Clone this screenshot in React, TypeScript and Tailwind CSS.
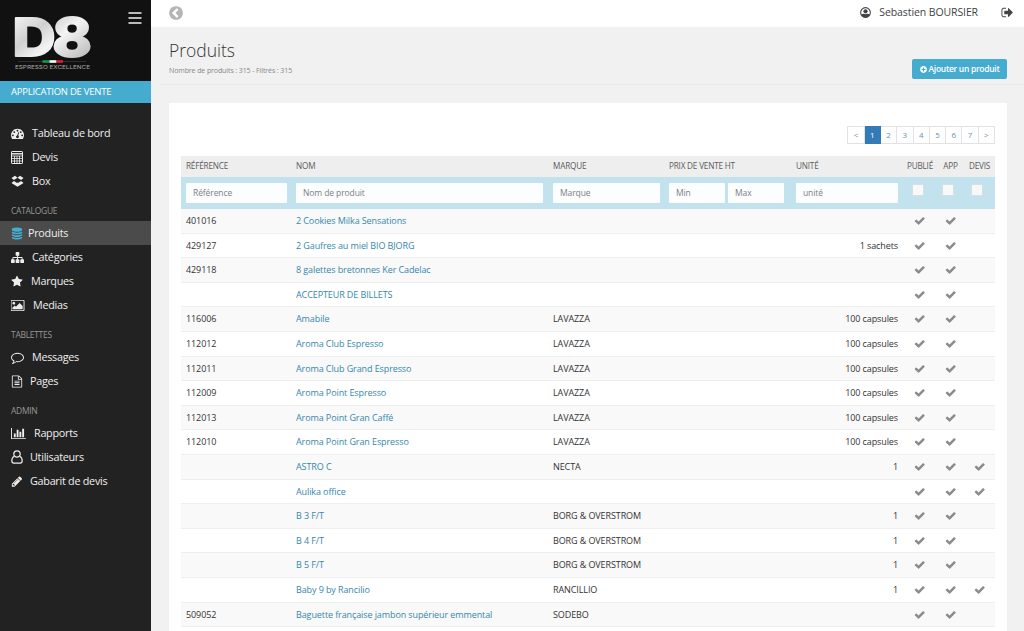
import type { ReactNode } from "react";
import { FaPlusCircle } from "react-icons/fa";

type Product = {
  ref?: string;
  name: string;
  brand?: string;
  unit?: string;
  quote?: boolean;
};

const products: Product[] = [
  { ref: "401016", name: "2 Cookies Milka Sensations" },
  { ref: "429127", name: "2 Gaufres au miel BIO BJORG", unit: "1 sachets" },
  { ref: "429118", name: "8 galettes bretonnes Ker Cadelac" },
  { name: "ACCEPTEUR DE BILLETS" },
  { ref: "116006", name: "Amabile", brand: "LAVAZZA", unit: "100 capsules" },
  { ref: "112012", name: "Aroma Club Espresso", brand: "LAVAZZA", unit: "100 capsules" },
  { ref: "112011", name: "Aroma Club Grand Espresso", brand: "LAVAZZA", unit: "100 capsules" },
  { ref: "112009", name: "Aroma Point Espresso", brand: "LAVAZZA", unit: "100 capsules" },
  { ref: "112013", name: "Aroma Point Gran Caffé", brand: "LAVAZZA", unit: "100 capsules" },
  { ref: "112010", name: "Aroma Point Gran Espresso", brand: "LAVAZZA", unit: "100 capsules" },
  { name: "ASTRO C", brand: "NECTA", unit: "1", quote: true },
  { name: "Aulika office", quote: true },
  { name: "B 3 F/T", brand: "BORG & OVERSTROM", unit: "1" },
  { name: "B 4 F/T", brand: "BORG & OVERSTROM", unit: "1" },
  { name: "B 5 F/T", brand: "BORG & OVERSTROM", unit: "1" },
  { name: "Baby 9 by Rancilio", brand: "RANCILLIO", unit: "1", quote: true },
  { ref: "509052", name: "Baguette française jambon supérieur emmental", brand: "SODEBO" }
];

const pages = ["<", "1", "2", "3", "4", "5", "6", "7", ">"];

const columns = "grid grid-cols-[110px_257px_116px_127px_112px_34px_27px_31px]";

const paths = {
  dashboard:
    "M384 1152q0-53-37.5-90.5t-90.5-37.5-90.5 37.5-37.5 90.5 37.5 90.5 90.5 37.5 90.5-37.5 37.5-90.5zm192-448q0-53-37.5-90.5t-90.5-37.5-90.5 37.5-37.5 90.5 37.5 90.5 90.5 37.5 90.5-37.5 37.5-90.5zm428 481l101-382q6-26-7.5-48.5t-38.5-29.5-48 6.5-30 39.5l-101 382q-60 5-107 43.5t-63 98.5q-20 77 20 146t117 89 146-20 89-117q16-60-6-117t-72-91zm660-33q0-53-37.5-90.5t-90.5-37.5-90.5 37.5-37.5 90.5 37.5 90.5 90.5 37.5 90.5-37.5 37.5-90.5zm-640-640q0-53-37.5-90.5t-90.5-37.5-90.5 37.5-37.5 90.5 37.5 90.5 90.5 37.5 90.5-37.5 37.5-90.5zm448 192q0-53-37.5-90.5t-90.5-37.5-90.5 37.5-37.5 90.5 37.5 90.5 90.5 37.5 90.5-37.5 37.5-90.5zm320 448q0 261-141 483-19 29-54 29h-1402q-35 0-54-29-141-221-141-483 0-182 71-348t191-286 286-191 348-71 348 71 286 191 191 286 71 348z",
  dropbox:
    "M402 829l494 305-342 285-490-319zm986 388v108l-490 293v1l-1-1-1 1v-1l-489-293v-108l147 96 342-284v-2l1 1 1-1v2l343 284zm-834-1106l342 285-494 304-338-270zm836 718l338 271-489 319-343-285zm-151-718l489 319-338 270-494-304z",
  database:
    "M896 768q237 0 443-43t325-127v170q0 69-103 128t-280 93.5-385 34.5-385-34.5-280-93.5-103-128v-170q119 84 325 127t443 43zm0 768q237 0 443-43t325-127v170q0 69-103 128t-280 93.5-385 34.5-385-34.5-280-93.5-103-128v-170q119 84 325 127t443 43zm0-384q237 0 443-43t325-127v170q0 69-103 128t-280 93.5-385 34.5-385-34.5-280-93.5-103-128v-170q119 84 325 127t443 43zm0-1152q208 0 385 34.5t280 93.5 103 128v128q0 69-103 128t-280 93.5-385 34.5-385-34.5-280-93.5-103-128v-128q0-69 103-128t280-93.5 385-34.5z",
  sitemap:
    "M1792 1248v320q0 40-28 68t-68 28h-320q-40 0-68-28t-28-68v-320q0-40 28-68t68-28h96v-192h-512v192h96q40 0 68 28t28 68v320q0 40-28 68t-68 28h-320q-40 0-68-28t-28-68v-320q0-40 28-68t68-28h96v-192h-512v192h96q40 0 68 28t28 68v320q0 40-28 68t-68 28h-320q-40 0-68-28t-28-68v-320q0-40 28-68t68-28h96v-192q0-52 38-90t90-38h512v-192h-96q-40 0-68-28t-28-68v-320q0-40 28-68t68-28h320q40 0 68 28t28 68v320q0 40-28 68t-68 28h-96v192h512q52 0 90 38t38 90v192h96q40 0 68 28t28 68z",
  star: "M1728 647q0 22-26 48l-363 354 86 500q1 7 1 20 0 21-10.5 35.5t-30.5 14.5q-19 0-40-12l-449-236-449 236q-22 12-40 12-21 0-31.5-14.5t-10.5-35.5q0-6 2-20l86-500-364-354q-25-27-25-48 0-37 56-46l502-73 225-455q19-41 49-41t49 41l225 455 502 73q56 9 56 46z",
  picture:
    "M576 576q0 80-56 136t-136 56-136-56-56-136 56-136 136-56 136 56 56 136zm1024 384v448h-1408v-192l320-320 160 160 512-512zm96-704h-1600q-13 0-22.5 9.5t-9.5 22.5v1216q0 13 9.5 22.5t22.5 9.5h1600q13 0 22.5-9.5t9.5-22.5v-1216q0-13-9.5-22.5t-22.5-9.5zm160 32v1216q0 66-47 113t-113 47h-1600q-66 0-113-47t-47-113v-1216q0-66 47-113t113-47h1600q66 0 113 47t47 113z",
  comment:
    "M896 384q-204 0-381.5 69.5t-282 187.5-104.5 255q0 112 71.5 213.5t201.5 175.5l87 50-27 96q-24 91-70 172 152-63 275-171l43-38 57 6q69 8 130 8 204 0 381.5-69.5t282-187.5 104.5-255-104.5-255-282-187.5-381.5-69.5zm896 512q0 174-120 321.5t-326 233-450 85.5q-70 0-145-8-198 175-460 242-49 14-114 22h-5q-15 0-27-10.5t-16-27.5v-1q-3-4-.5-12t2-10 4.5-9.5l6-9 7-8.5 8-9q7-8 31-34.5t34.5-38 31-39.5 32.5-51 27-59 26-76q-157-89-247.5-220t-90.5-281q0-174 120-321.5t326-233 450-85.5 450 85.5 326 233 120 321.5z",
  file: "M1596 380q28 28 48 76t20 88v1152q0 40-28 68t-68 28h-1344q-40 0-68-28t-28-68v-1600q0-40 28-68t68-28h896q40 0 88 20t76 48zm-444-244v376h376q-10-29-22-41l-313-313q-12-12-41-22zm384 1528v-1024h-416q-40 0-68-28t-28-68v-416h-768v1536h1280zm-1024-864q0-14 9-23t23-9h704q14 0 23 9t9 23v64q0 14-9 23t-23 9h-704q-14 0-23-9t-9-23v-64zm736 224q14 0 23 9t9 23v64q0 14-9 23t-23 9h-704q-14 0-23-9t-9-23v-64q0-14 9-23t23-9h704zm0 256q14 0 23 9t9 23v64q0 14-9 23t-23 9h-704q-14 0-23-9t-9-23v-64q0-14 9-23t23-9h704z",
  chart:
    "M640 896v512h-256v-512h256zm384-512v1024h-256v-1024h256zm1024 1152v128h-2048v-1536h128v1408h1920zm-640-896v768h-256v-768h256zm384-384v1152h-256v-1152h256z",
  pencil:
    "M491 1536l91-91-235-235-91 91v107h128v128h107zm523-928q0-22-22-22-10 0-17 7l-542 542q-7 7-7 17 0 22 22 22 10 0 17-7l542-542q7-7 7-17zm-54-192l416 416-832 832h-416v-416zm683 96q0 53-37 90l-166 166-416-416 166-165q36-38 90-38 53 0 91 38l235 234q37 39 37 91z",
  check:
    "M1671 566q0 40-28 68l-724 724-136 136q-28 28-68 28t-68-28l-136-136-362-362q-28-28-28-68t28-68l136-136q28-28 68-28t68 28l294 295 656-657q28-28 68-28t68 28l136 136q28 28 28 68z",
  back: "M1037 1395l102-102q19-19 19-45t-19-45l-307-307 307-307q19-19 19-45t-19-45l-102-102q-19-19-45-19t-45 19l-454 454q-19 19-19 45t19 45l454 454q19 19 45 19t45-19zm627-499q0 209-103 385.5t-279.5 279.5-385.5 103-385.5-103-279.5-279.5-103-385.5 103-385.5 279.5-279.5 385.5-103 385.5 103 279.5 279.5 103 385.5z",
  signOut:
    "M704 1440q0 4 1 20t.5 26.5-3 23.5-10 19.5-20.5 6.5h-320q-119 0-203.5-84.5t-84.5-203.5v-704q0-119 84.5-203.5t203.5-84.5h320q13 0 22.5 9.5t9.5 22.5q0 4 1 20t.5 26.5-3 23.5-10 19.5-20.5 6.5h-320q-66 0-113 47t-47 113v704q0 66 47 113t113 47h312l11.5 1 11.5 3 8 5.5 7 9 2 13.5zm928-544q0 26-19 45l-544 544q-19 19-45 19t-45-19-19-45v-288h-448q-26 0-45-19t-19-45v-384q0-26 19-45t45-19h448v-288q0-26 19-45t45-19 45 19l544 544q19 19 19 45z"
};

function Glyph({ d, box = "0 0 1792 1792", className }: { d: string; box?: string; className: string }) {
  return (
    <svg viewBox={box} className={className} fill="currentColor">
      <path d={d} />
    </svg>
  );
}

function CalculatorIcon() {
  return (
    <svg viewBox="0 0 12 13" className="h-[13px] w-3" fill="none" stroke="currentColor">
      <rect x="0.5" y="0.5" width="11" height="12" rx="0.6" />
      <path d="M1 2.8h10" strokeWidth="1.4" />
      <path d="M1 5h10M1 7.5h10M1 10h10M3.5 5v7.5M6 5v7.5M8.5 5v7.5" strokeWidth="0.8" />
    </svg>
  );
}

function UserIcon() {
  return (
    <svg viewBox="0 0 12 14" className="h-3.5 w-3" fill="none" stroke="currentColor" strokeWidth="1.2">
      <circle cx="6" cy="4" r="3.2" />
      <path d="M3.3 6.2C1.6 7 .8 8.7.8 10.8c0 1.5.8 2.4 2 2.4h6.4c1.2 0 2-.9 2-2.4 0-2.1-.8-3.8-2.5-4.6" />
    </svg>
  );
}

function AccountIcon() {
  return (
    <svg viewBox="0 0 12 12" className="h-[11px] w-[11px]" fill="currentColor">
      <circle cx="6" cy="6" r="5.3" fill="none" stroke="currentColor" strokeWidth="1.2" />
      <circle cx="6" cy="4.7" r="2.3" />
      <path d="M1.2 8.6C2 7.8 3.4 7.4 4.4 7.4c1 .6 2.2.6 3.2 0 1 0 2.4.4 3.2 1.2C8.6 12.4 3.4 12.4 1.2 8.6z" />
    </svg>
  );
}

function Logo() {
  return (
    <svg viewBox="0 0 80 58" className="h-[58px] w-20 overflow-visible">
      <defs>
        <linearGradient id="steel" x1="0" y1="0" x2="1" y2="1">
          <stop offset="0" stopColor="#ffffff" />
          <stop offset="0.35" stopColor="#d0d0d0" />
          <stop offset="0.55" stopColor="#f4f4f4" />
          <stop offset="1" stopColor="#a9a9a9" />
        </linearGradient>
      </defs>
      <text
        x="-1.5"
        y="41"
        fill="url(#steel)"
        stroke="url(#steel)"
        strokeWidth="1.8"
        strokeLinejoin="round"
        fontFamily="Inter, sans-serif"
        fontWeight="800"
        fontSize="52"
        letterSpacing="-3"
        textLength="76"
        lengthAdjust="spacingAndGlyphs"
      >
        D8
      </text>
      <path d="M4 46.5h68" stroke="#3c3c3c" strokeWidth="0.7" />
      <path d="M28.5 46.5h7" stroke="#159a4b" strokeWidth="2.6" />
      <path d="M35.5 46.5h7" stroke="#ffffff" strokeWidth="2.6" />
      <path d="M42.5 46.5h6.5" stroke="#d8202f" strokeWidth="2.6" />
      <text x="1" y="54" fontSize="4.8" fontFamily="Inter, sans-serif" fill="#a8a8a8" textLength="75" lengthAdjust="spacingAndGlyphs">ESPRESSO EXCELLENCE</text>
    </svg>
  );
}

function NavItem({ icon, label, gap, active }: { icon: ReactNode; label: string; gap: string; active?: boolean }) {
  return (
    <a className={`flex h-6 items-center pl-[11px] text-[10.8px] tracking-[-0.27px] text-[#eeeeee] ${gap} ${active ? "bg-[#4b4b4b]" : ""}`}>
      {icon}
      <span>{label}</span>
    </a>
  );
}

function NavTitle({ children }: { children: ReactNode }) {
  return <div className="mt-[10px] mb-px flex h-[17px] items-center pl-[11px] text-[8.5px] tracking-[-0.3px] text-[#969696]">{children}</div>;
}

function Sidebar() {
  return (
    <aside className="flex w-[151px] shrink-0 flex-col bg-[#222222]">
      <div className="flex h-[81px] items-start justify-between bg-[#111111] pl-[14px] pr-[9px]">
        <div className="pt-[15px]"><Logo /></div>
        <svg viewBox="0 0 14 12" className="mt-3 h-3 w-[14px]" stroke="#f2f2f2" strokeWidth="1.7">
          <path d="M0.5 1h13M0.5 6h13M0.5 11h13" />
        </svg>
      </div>
      <div className="flex h-[22px] items-center bg-[#46accf] pl-[11px] pt-px text-[9.5px] tracking-[-0.25px] text-white">APPLICATION DE VENTE</div>
      <nav className="pt-[18px]">
        <NavItem icon={<Glyph d={paths.dashboard} className="h-[13px] w-[13px]" />} label="Tableau de bord" gap="gap-2" />
        <NavItem icon={<CalculatorIcon />} label="Devis" gap="gap-[9px]" />
        <NavItem icon={<Glyph d={paths.dropbox} className="h-[13px] w-[13px]" />} label="Box" gap="gap-2" />
        <NavTitle>CATALOGUE</NavTitle>
        <NavItem active icon={<Glyph d={paths.database} className="h-[13px] w-3 text-[#46accf]" />} label="Produits" gap="gap-[5px]" />
        <NavItem icon={<Glyph d={paths.sitemap} className="h-[13px] w-[13px]" />} label="Catégories" gap="gap-2" />
        <NavItem icon={<Glyph d={paths.star} className="h-[13px] w-3" />} label="Marques" gap="gap-2" />
        <NavItem icon={<Glyph d={paths.picture} box="0 0 1920 1792" className="h-[13px] w-[14px]" />} label="Medias" gap="gap-2" />
        <NavTitle>TABLETTES</NavTitle>
        <NavItem icon={<Glyph d={paths.comment} className="h-[13px] w-[13px]" />} label="Messages" gap="gap-2" />
        <NavItem icon={<Glyph d={paths.file} className="h-[13px] w-3" />} label="Pages" gap="gap-[7px]" />
        <NavTitle>ADMIN</NavTitle>
        <NavItem icon={<Glyph d={paths.chart} box="0 0 2048 1792" className="h-[13px] w-[15px]" />} label="Rapports" gap="gap-2" />
        <NavItem icon={<UserIcon />} label="Utilisateurs" gap="gap-[7px]" />
        <NavItem icon={<Glyph d={paths.pencil} className="h-[13px] w-3" />} label="Gabarit de devis" gap="gap-[7px]" />
      </nav>
    </aside>
  );
}

function Field({ label, className }: { label: string; className: string }) {
  return <div className={`flex h-[20px] items-center rounded-[1px] bg-[#fbfdfe] pl-[7px] text-[8.5px] text-[#7f7f7f] ${className}`}>{label}</div>;
}

function Box({ className }: { className: string }) {
  return <div className={`-mt-[6px] h-3 w-3 rounded-[1px] border border-[#d9dfe1] bg-[#f8f8f8] ${className}`} />;
}

function Tick({ on }: { on?: boolean }) {
  return <div className="flex justify-center">{on ? <Glyph d={paths.check} className="h-[11.5px] w-[11.5px] text-[#8b8b8b]" /> : null}</div>;
}

function ProductRow({ product, odd }: { product: Product; odd: boolean }) {
  return (
    <div className={`${columns} h-[24.6px] items-center border-b border-[#eeeeee] text-[#333333] ${odd ? "bg-[#f9f9f9]" : "bg-white"}`}>
      <div className="pl-[5px]">{product.ref}</div>
      <div className="pl-[5px] text-[#3588ab]">{product.name}</div>
      <div className="pl-[5px]">{product.brand}</div>
      <div />
      <div className="pr-[5px] text-right">{product.unit}</div>
      <Tick on />
      <Tick on />
      <Tick on={product.quote} />
    </div>
  );
}

export default function App() {
  return (
    <div className="flex h-[631px] w-[1024px] overflow-hidden bg-[#f1f1f1] font-['Open_Sans',sans-serif]">
      <Sidebar />
      <main className="flex min-w-0 flex-1 flex-col">
        <header className="flex h-[27px] shrink-0 items-center justify-between bg-white pl-[17px] pr-[10px]">
          <Glyph d={paths.back} className="mb-px h-4 w-4 text-[#b5b5b5]" />
          <div className="flex items-center pb-[2px] text-[10.5px] tracking-[-0.1px] text-[#444444]">
            <AccountIcon />
            <span className="ml-2">Sebastien BOURSIER</span>
            <Glyph d={paths.signOut} className="ml-[23px] h-[13px] w-[13px]" />
          </div>
        </header>

        <div className="ml-[9px] flex h-[58px] shrink-0 items-start justify-between border-b border-[#e8e8e8] pl-[9px] pr-[17px]">
          <div>
            <h1 className="mt-[11px] text-[17.5px] leading-6 font-light text-[#333333]">Produits</h1>
            <div className="mt-[4px] text-[7px] leading-[10px] tracking-[-0.1px] text-[#888888]">Nombre de produits : 315 - Filtrés : 315</div>
          </div>
          <button className="mt-[32px] flex h-[20px] w-[95px] items-center justify-center gap-[2px] rounded-[2px] bg-[#46accf] text-[8.5px] font-semibold tracking-[-0.3px] text-white">
            <FaPlusCircle className="h-[7px] w-[7px]" />
            Ajouter un produit
          </button>
        </div>

        <section className="ml-[18px] mr-[17px] mt-[18px] flex-1 bg-white px-3 pt-[23px]">
          <div className="flex h-[18px] justify-end">
            <div className="flex border-l border-[#e2e2e2]">
              {pages.map((page) => (
                <div
                  key={page}
                  className={`flex w-[16.3px] items-center justify-center border-y border-r text-[8px] ${page === "1" ? "border-[#337ab7] bg-[#337ab7] text-white" : "border-[#e2e2e2] text-[#6a93ae]"}`}
                >
                  {page}
                </div>
              ))}
            </div>
          </div>

          <div className="mt-[12px] text-[9px] tracking-[-0.1px]">
            <div className={`${columns} h-[21px] items-center bg-[#eeeeee] text-[8.2px] tracking-[-0.2px] text-[#5c5c5c]`}>
              {["RÉFÉRENCE", "NOM", "MARQUE", "PRIX DE VENTE HT", "UNITÉ"].map((title) => (
                <div key={title} className="pl-[5px]">{title}</div>
              ))}
              {["PUBLIÉ", "APP", "DEVIS"].map((title) => (
                <div key={title} className="text-center">{title}</div>
              ))}
            </div>
            <div className={`${columns} h-[32px] items-center bg-[#c2e3ee]`}>
              <Field label="Référence" className="ml-[5px] w-[101px]" />
              <Field label="Nom de produit" className="ml-[5px] w-[247px]" />
              <Field label="Marque" className="ml-[5px] w-[107px]" />
              <div className="flex gap-[3px] pl-[5px]">
                <Field label="Min" className="w-[56px]" />
                <Field label="Max" className="w-[56px]" />
              </div>
              <Field label="unité" className="ml-[5px] w-[102px]" />
              <Box className="ml-[9px]" />
              <Box className="ml-[5px]" />
              <Box className="ml-[7px]" />
            </div>
            {products.map((product, index) => (
              <ProductRow key={product.name} product={product} odd={index % 2 === 0} />
            ))}
          </div>
        </section>
      </main>
    </div>
  );
}
